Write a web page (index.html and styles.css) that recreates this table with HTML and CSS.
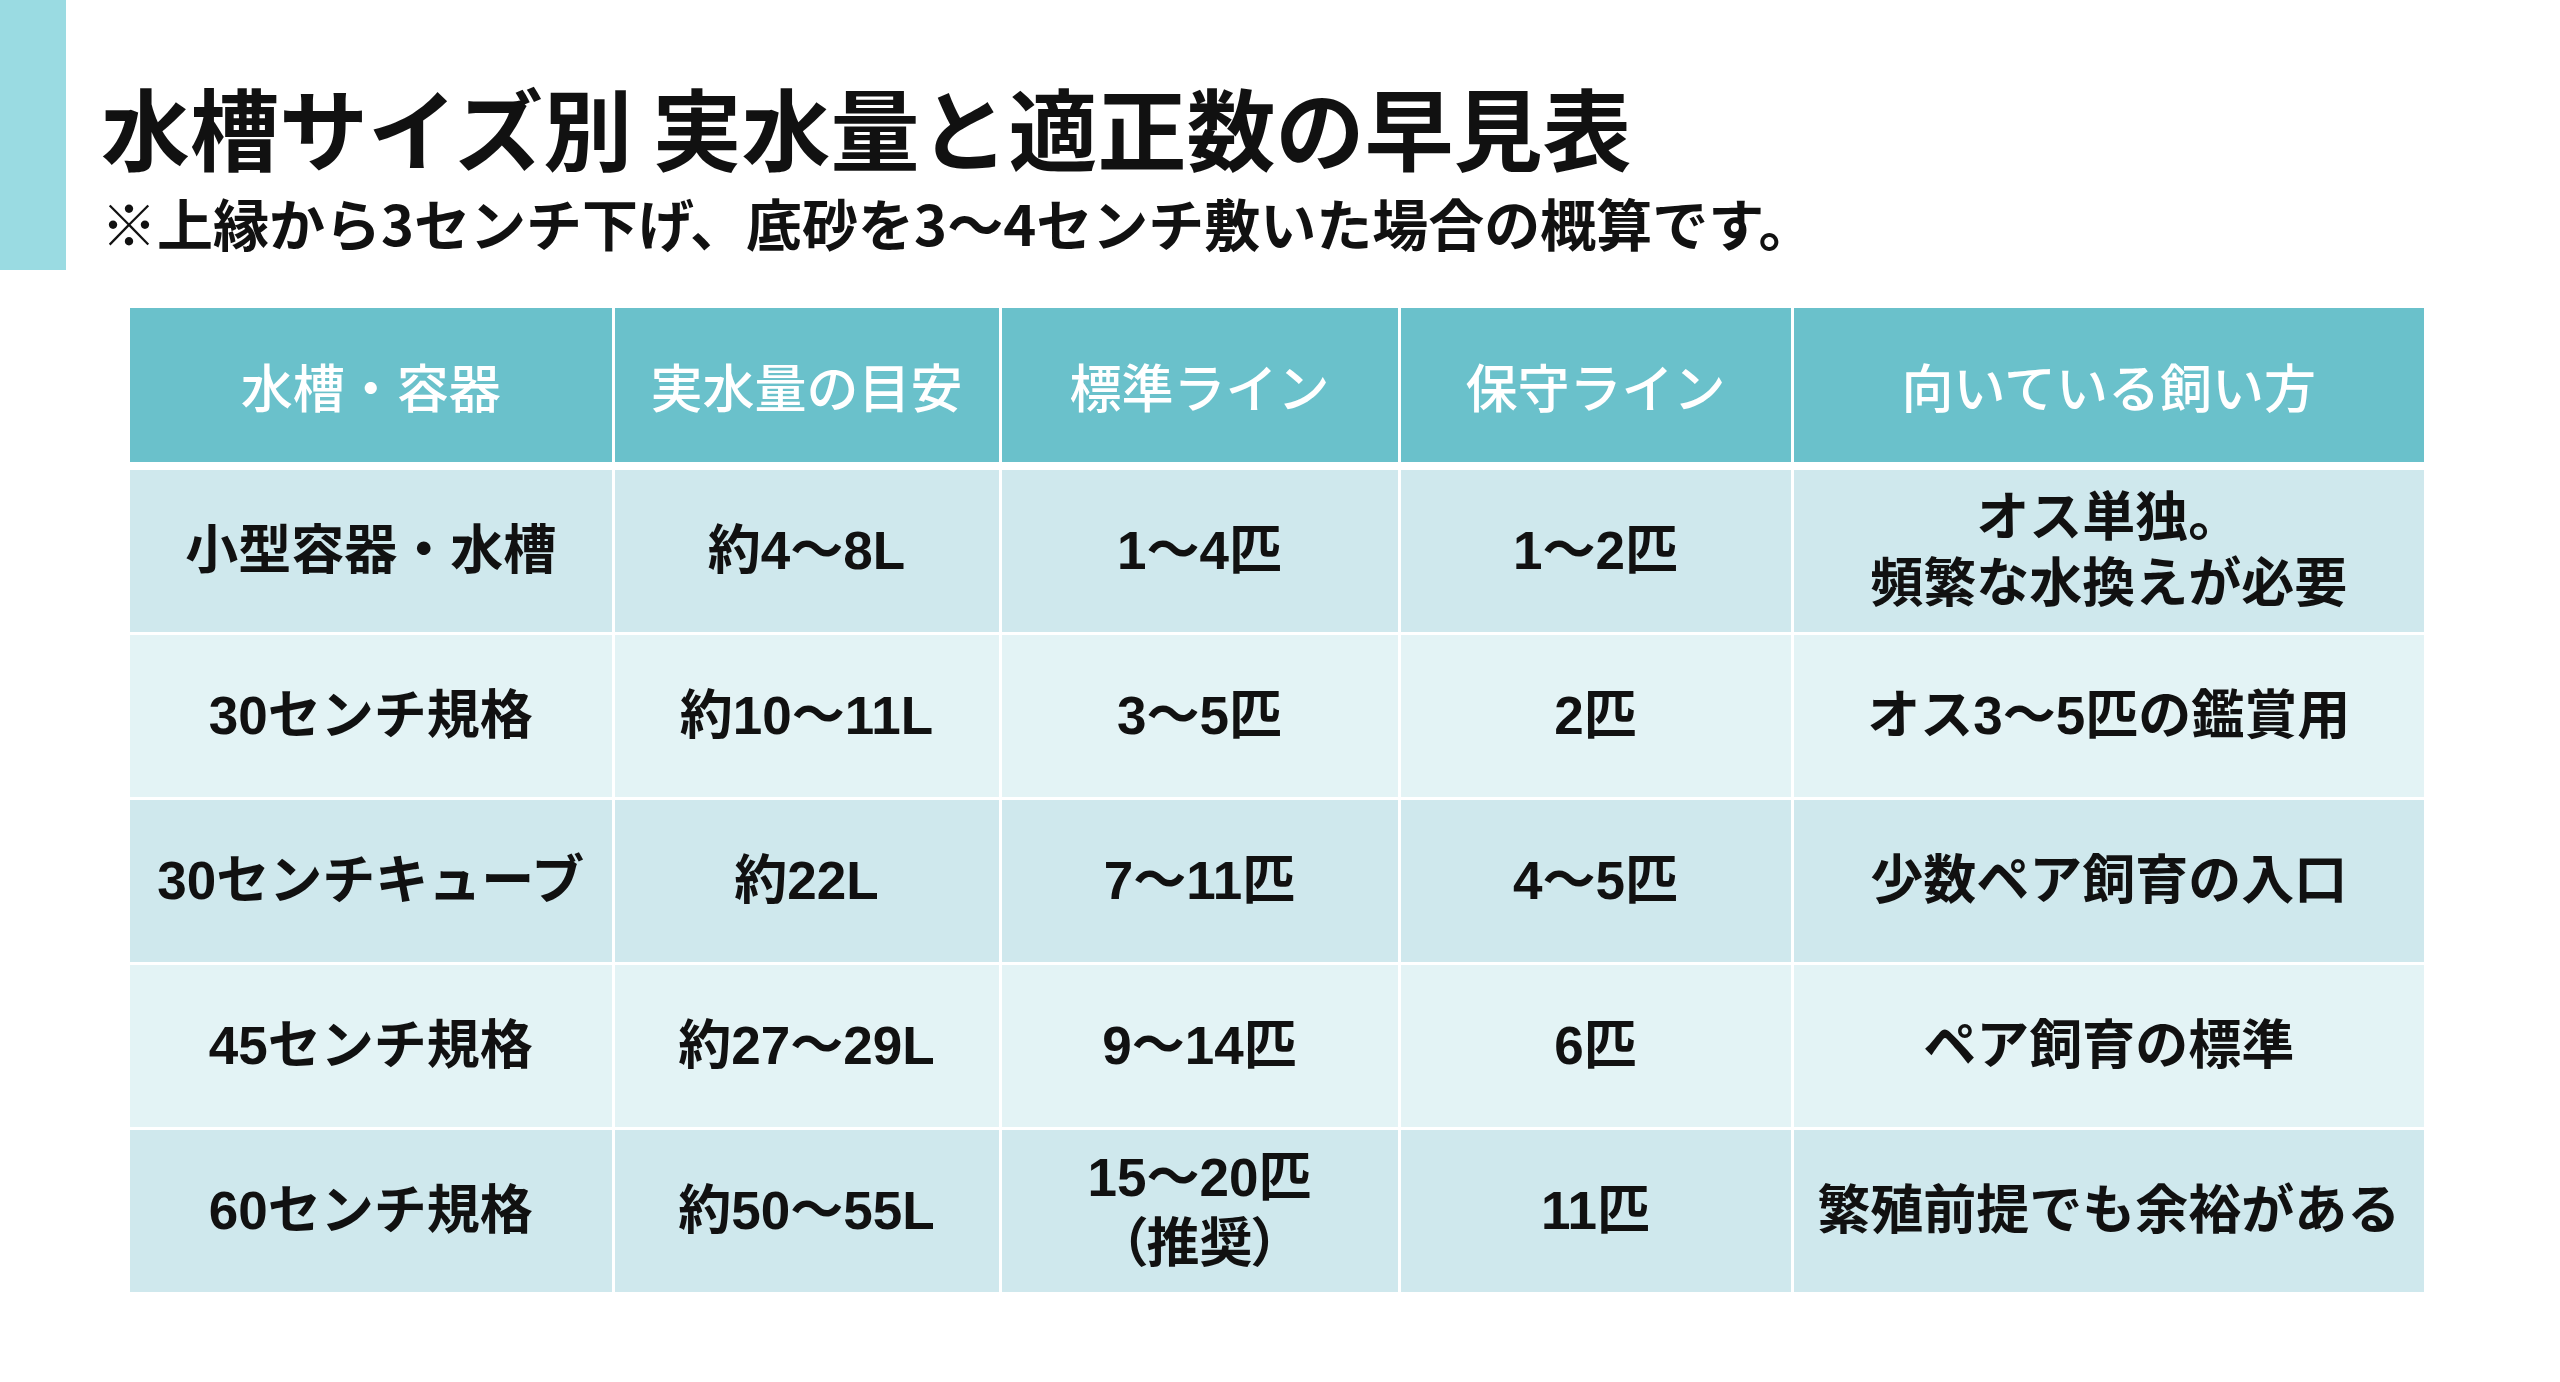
FILE: index.html
```html
<!DOCTYPE html>
<html lang="ja">
<head>
<meta charset="utf-8">
<title>水槽サイズ別 実水量と適正数の早見表</title>
<link rel="stylesheet" href="styles.css">
</head>
<body>
<div class="page">
  <header class="heading">
    <div class="accent"></div>
    <div class="titles">
      <h1 class="title">水槽サイズ別 実水量と適正数の早見表</h1>
      <p class="subtitle">※上縁から3センチ下げ、底砂を3〜4センチ敷いた場合の概算です。</p>
    </div>
  </header>
  <main class="table-wrap">
    <table class="chart">
      <colgroup>
        <col class="c1"><col class="c2"><col class="c3"><col class="c4"><col class="c5">
      </colgroup>
      <thead>
        <tr>
          <th>水槽・容器</th>
          <th>実水量の目安</th>
          <th>標準ライン</th>
          <th>保守ライン</th>
          <th>向いている飼い方</th>
        </tr>
      </thead>
      <tbody>
        <tr class="odd">
          <td>小型容器・水槽</td>
          <td>約4〜8L</td>
          <td>1〜4匹</td>
          <td>1〜2匹</td>
          <td><span class="line">オス単独。</span><span class="line">頻繁な水換えが必要</span></td>
        </tr>
        <tr class="even">
          <td>30センチ規格</td>
          <td>約10〜11L</td>
          <td>3〜5匹</td>
          <td>2匹</td>
          <td>オス3〜5匹の鑑賞用</td>
        </tr>
        <tr class="odd">
          <td>30センチキューブ</td>
          <td>約22L</td>
          <td>7〜11匹</td>
          <td>4〜5匹</td>
          <td>少数ペア飼育の入口</td>
        </tr>
        <tr class="even">
          <td>45センチ規格</td>
          <td>約27〜29L</td>
          <td>9〜14匹</td>
          <td>6匹</td>
          <td>ペア飼育の標準</td>
        </tr>
        <tr class="odd">
          <td>60センチ規格</td>
          <td>約50〜55L</td>
          <td><span class="line">15〜20匹</span><span class="line note">（推奨）</span></td>
          <td>11匹</td>
          <td>繁殖前提でも余裕がある</td>
        </tr>
      </tbody>
    </table>
  </main>
</div>
</body>
</html>
```

FILE: styles.css
```css
html, body {
  margin: 0;
  padding: 0;
  background: #ffffff;
}

body {
  font-family: "Noto Sans CJK JP", "Noto Sans", sans-serif;
  color: #111111;
}

.page {
  width: 2560px;
  height: 1382px;
  overflow: hidden;
}

.heading {
  display: flex;
  align-items: flex-start;
}

.accent {
  width: 66px;
  height: 270px;
  background: #9adbe2;
  flex: none;
}

.titles {
  padding-left: 35px;
  padding-top: 70px;
}

.title {
  margin: 0;
  font-size: 89px;
  line-height: 112px;
  font-weight: 700;
  white-space: nowrap;
}

.subtitle {
  margin: 0;
  font-size: 56px;
  line-height: 80px;
  font-weight: 700;
  white-space: nowrap;
}

.table-wrap {
  padding-left: 130px;
  margin-top: 38px;
}

.chart {
  border-collapse: collapse;
  table-layout: fixed;
  width: 2294px;
}

.c1 { width: 483px; }
.c2 { width: 387px; }
.c3 { width: 399px; }
.c4 { width: 393px; }
.c5 { width: 632px; }

.chart th,
.chart td {
  text-align: center;
  vertical-align: middle;
  padding: 0;
  border-left: 3px solid #ffffff;
  border-right: 3px solid #ffffff;
}

.chart th:first-child,
.chart td:first-child {
  border-left: none;
}

.chart th:last-child,
.chart td:last-child {
  border-right: none;
}

.chart th {
  height: 154px;
  background: #6ac1cb;
  color: #ffffff;
  font-size: 52px;
  font-weight: 500;
  border-bottom: 8px solid #ffffff;
}

.chart td {
  height: 162px;
  font-family: "Liberation Sans", "Noto Sans CJK JP", sans-serif;
  font-size: 53px;
  font-weight: 700;
  line-height: 66px;
  border-bottom: 3px solid #ffffff;
}

.chart tbody tr:last-child td {
  border-bottom: none;
}

.odd td {
  background: #cfe8ed;
}

.even td {
  background: #e3f3f5;
}

.line {
  display: block;
  height: 66px;
  line-height: 66px;
}

.note {
  font-feature-settings: "palt";
}
```
